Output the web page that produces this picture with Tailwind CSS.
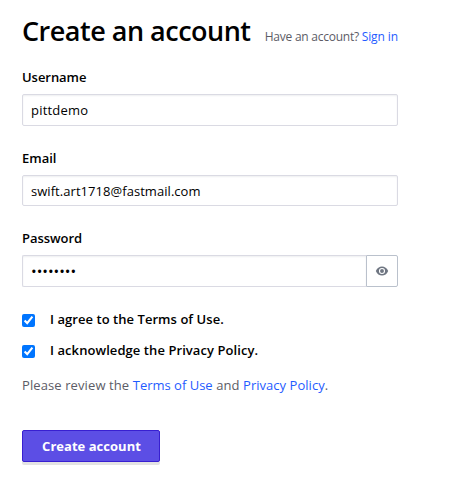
<!DOCTYPE html>
<html lang="en">
<head>
<meta charset="utf-8">
<title>Create an account</title>
<script src="https://cdn.jsdelivr.net/npm/@tailwindcss/browser@4"></script>
</head>
<body class="bg-white text-black font-['Open_Sans','Noto_Sans',sans-serif] text-[13px] leading-5">
<main class="ml-[22px] w-[376px] pt-[13px]">
  <header class="flex h-9 items-baseline justify-between whitespace-nowrap">
    <h1 class="text-[27px] leading-9 font-[550] tracking-[-0.5px]">Create an account</h1>
    <p class="text-xs text-[#5c5c66] tracking-[-0.25px]">Have an account? <a href="#" class="text-[#1f5cff] tracking-[-0.1px]">Sign in</a></p>
  </header>
  <form>
    <div class="mt-[18px]">
      <label for="user" class="block h-5 font-[550] tracking-[-0.05px]">Username</label>
      <input id="user" value="pittdemo" class="mt-[7px] block h-8 w-full rounded-[2px] border border-[#dadae3] px-2 tracking-[0.2px] shadow-[inset_0_1px_2px_#eeeff1] outline-none">
    </div>
    <div class="mt-[22px]">
      <label for="mail" class="block h-5 font-[550]">Email</label>
      <input id="mail" value="swift.art1718@fastmail.com" class="mt-[7px] block h-[31px] w-full rounded-[2px] border border-[#dadae3] px-2 tracking-[0.05px] shadow-[inset_0_1px_2px_#eeeff1] outline-none">
    </div>
    <div class="mt-[22px]">
      <label for="pass" class="block h-5 font-[550] tracking-[-0.05px]">Password</label>
      <div class="mt-[7px] flex h-8">
        <input id="pass" type="password" value="abcdefgh" class="min-w-0 flex-1 rounded-l-[2px] border border-r-0 border-[#dadae3] px-2 text-[15px] shadow-[inset_0_1px_2px_#eeeff1] outline-none">
        <button type="button" aria-label="Show password" class="flex w-8 items-center justify-center rounded-r-[2px] border border-[#bac1cc]">
          <svg class="h-4 w-4" viewBox="0 0 16 16" fill="none"><path d="M1.8 8C3 5 5.4 3.5 8 3.5S13 5 14.2 8C13 11 10.6 12.5 8 12.5S3 11 1.8 8Z" fill="#6f7682"/><circle cx="8" cy="8" r="2.5" stroke="#fff" stroke-width="1.1"/></svg>
        </button>
      </div>
    </div>
    <label class="mt-[22px] flex h-5 items-center gap-[15px] font-[550]"><input type="checkbox" checked class="mt-[3px] h-[13px] w-[13px] accent-[#0075ff]"><span class="tracking-[0.05px]">I agree to the Terms of Use.</span></label>
    <label class="mt-[11px] flex h-5 items-center gap-[15px] font-[550]"><input type="checkbox" checked class="mt-[3px] h-[13px] w-[13px] accent-[#0075ff]"><span class="tracking-[0.07px]">I acknowledge the Privacy Policy.</span></label>
    <p class="mt-[15px] tracking-[0.1px] text-[#5c5c66]">Please review the <a href="#" class="text-[#1f5cff] tracking-[0px]">Terms of Use</a> and <a href="#" class="text-[#1f5cff] tracking-[0.03px]">Privacy Policy</a>.</p>
    <div class="mt-[35px] w-[138px] rounded-[2px] bg-[#e3e3e3] pb-[3px]">
      <button type="button" class="block h-8 w-full rounded-[2px] border border-[#381fd1] bg-[#5c4ee5] pl-px font-bold text-white tracking-[0.03px]">Create account</button>
    </div>
  </form>
</main>
</body>
</html>
